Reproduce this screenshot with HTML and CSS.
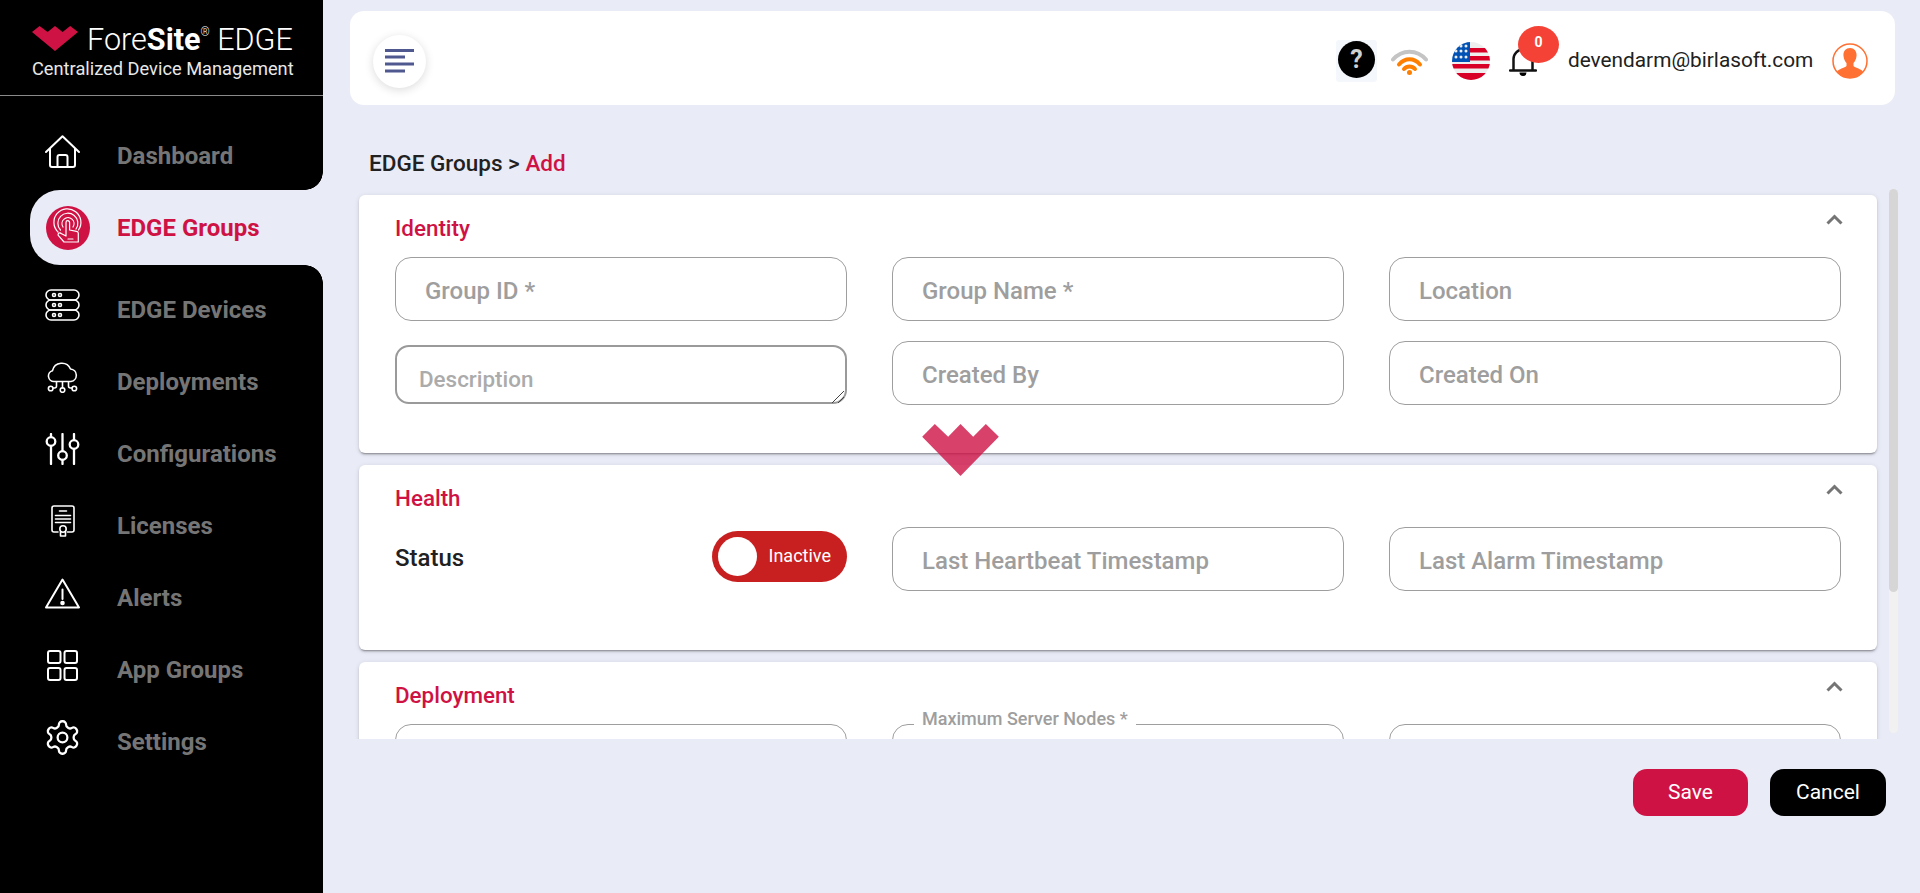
FILE: index.html
```html
<!DOCTYPE html>
<html lang="en">
<head>
    <meta charset="UTF-8">
    <title>EDGE Groups - Add</title>
    <link rel="stylesheet" href="styles.css">
</head>
<body>
    <aside class="sidebar">
        <div class="brand">
            <div class="brand-top">
                <svg class="brand-mark" viewBox="0 0 230 156" preserveAspectRatio="none"><path d="M0 38L38 0L78 38L115 0L153 38L191 0L230 38L115 156Z"/></svg>
                <div class="brand-name">Fore<b>Site</b><sup>®</sup> EDGE</div>
            </div>
            <div class="brand-sub">Centralized Device Management</div>
        </div>
        <nav class="nav">
            <a class="nav-item">
                <span class="nav-icon"><svg width="35" height="33" viewBox="0 0 35 33"><path d="M1 17L17.5 1.2L34 17M5 13.5V30a2 2 0 0 0 2 2H28a2 2 0 0 0 2-2V13.5M12.5 32V22a2 2 0 0 1 2-2h6a2 2 0 0 1 2 2V32"/></svg></span>
                Dashboard
            </a>
            <a class="nav-item active">
                <span class="nav-icon">
                    <svg width="44" height="44" viewBox="0 0 44 44">
                        <circle class="disc" cx="22" cy="22" r="22"/>
                        <g class="touch">
                            <path d="M17 21a6 6 0 1 1 10 0M14.5 24a10 10 0 1 1 15.5-1M12 26a13.500 13.500 0 1 1 20.500-2"/>
                            <path d="M20 24V16.500a1.800 1.800 0 0 1 3.600 0V24l7 1.300a2 2 0 0 1 1.700 2V36H18l-5.500-6.300a1.700 1.700 0 0 1 2.600-2.200L20 30ZM22 33h5"/>
                        </g>
                    </svg>
                </span>
                EDGE Groups
            </a>
            <a class="nav-item after-active">
                <span class="nav-icon"><svg class="thin" width="35" height="32" viewBox="0 0 35 32"><rect x="1" y="1" width="33" height="10" rx="5"/><rect x="1" y="11" width="33" height="10" rx="5"/><rect x="1" y="21" width="33" height="10" rx="5"/><circle cx="9" cy="6" r="1.500"/><circle cx="15" cy="6" r="1.500"/><circle cx="9" cy="16" r="1.500"/><circle cx="15" cy="16" r="1.500"/><circle cx="9" cy="26" r="1.500"/><circle cx="15" cy="26" r="1.500"/></svg></span>
                EDGE Devices
            </a>
            <a class="nav-item">
                <span class="nav-icon"><svg class="thin" width="35" height="31" viewBox="0 0 35 31"><path d="M10 19.500H9a5.500 5.500 0 0 1-1.500-10.800A9.500 9.500 0 0 1 25.500 7a6.300 6.300 0 0 1 .5 12.500ZM17.500 19.500V26M11.500 19.500V24a2 2 0 0 1-2 2H8M23.500 19.500V24a2 2 0 0 0 2 2H27"/><circle cx="5.700" cy="26.500" r="2.300"/><circle cx="17.500" cy="28" r="2.300"/><circle cx="29.300" cy="26.500" r="2.300"/></svg></span>
                Deployments
            </a>
            <a class="nav-item">
                <span class="nav-icon"><svg class="thick" width="35" height="32" viewBox="0 0 35 32"><path d="M6 1V4M6 13V31M17.500 1V18M17.500 27V31M29 1V7M29 16V31"/><circle cx="6" cy="8.500" r="4.300"/><circle cx="17.500" cy="22.500" r="4.300"/><circle cx="29" cy="11.500" r="4.300"/></svg></span>
                Configurations
            </a>
            <a class="nav-item">
                <span class="nav-icon"><svg class="thin" width="35" height="32" viewBox="0 0 35 32"><path d="M13 27H9a2 2 0 0 1-2-2V3a2 2 0 0 1 2-2H27a2 2 0 0 1 2 2V25a2 2 0 0 1-2 2H22.500M14.500 6h7M10.500 10.500h15M10.500 14h15M10.500 17.500h15"/><circle cx="18" cy="24" r="3.200"/><path d="M15.500 27v4h5v-4"/></svg></span>
                Licenses
            </a>
            <a class="nav-item">
                <span class="nav-icon"><svg width="35" height="31" viewBox="0 0 35 31"><path d="M17.500 1.500L34 29.500H1ZM17.500 11.500V21"/><circle class="dot" cx="17.500" cy="25" r="1.300"/></svg></span>
                Alerts
            </a>
            <a class="nav-item">
                <span class="nav-icon"><svg width="35" height="31" viewBox="0 0 35 31"><rect x="3" y="1" width="12.500" height="12" rx="2"/><rect x="19.500" y="1" width="12.500" height="12" rx="2"/><rect x="3" y="18" width="12.500" height="12" rx="2"/><rect x="19.500" y="18" width="12.500" height="12" rx="2"/></svg></span>
                App Groups
            </a>
            <a class="nav-item">
                <span class="nav-icon"><svg class="gear" width="39" height="39" viewBox="0 0 24 24"><path d="M12.220 2h-.44a2 2 0 0 0-2 2v.18a2 2 0 0 1-1 1.730l-.43.25a2 2 0 0 1-2 0l-.15-.08a2 2 0 0 0-2.730.73l-.22.38a2 2 0 0 0 .73 2.730l.15.1a2 2 0 0 1 1 1.720v.51a2 2 0 0 1-1 1.740l-.15.09a2 2 0 0 0-.73 2.730l.22.38a2 2 0 0 0 2.730.73l.15-.08a2 2 0 0 1 2 0l.43.25a2 2 0 0 1 1 1.730V20a2 2 0 0 0 2 2h.44a2 2 0 0 0 2-2v-.18a2 2 0 0 1 1-1.730l.43-.25a2 2 0 0 1 2 0l.15.08a2 2 0 0 0 2.730-.73l.22-.39a2 2 0 0 0-.73-2.730l-.15-.08a2 2 0 0 1-1-1.740v-.5a2 2 0 0 1 1-1.740l.15-.09a2 2 0 0 0 .73-2.730l-.22-.38a2 2 0 0 0-2.730-.73l-.15.08a2 2 0 0 1-2 0l-.43-.25a2 2 0 0 1-1-1.730V4a2 2 0 0 0-2-2z"/><circle cx="12" cy="12" r="3"/></svg></span>
                Settings
            </a>
        </nav>
    </aside>

    <main class="main">
        <header class="topbar">
            <button class="menu-btn">
                <svg width="29" height="24" viewBox="0 0 29 24"><path d="M0 1.500H29M0 8H20M0 15H29M0 22H20"/></svg>
            </button>
            <div class="topbar-right">
                <div class="help"><span class="help-disc">?</span></div>
                <svg class="wifi" width="37" height="28" viewBox="0 0 37 28">
                    <path class="wifi-off" d="M2 12.500C11 2 26 2 35 12.500"/>
                    <path class="wifi-on" d="M8 17.500C14 10.500 23 10.500 29 17.500M13 22C16 18.500 21 18.500 24 22"/>
                    <circle cx="18.500" cy="25.500" r="2.500" fill="#ff7f00"/>
                </svg>
                <svg class="flag" width="38" height="38" viewBox="0 0 38 38">
                    <clipPath id="flagClip"><circle cx="19" cy="19" r="19"/></clipPath>
                    <g clip-path="url(#flagClip)">
                        <rect width="38" height="38" fill="#eeeeee"/>
                        <path d="M14 6H38V10.500H14ZM14 14H38V18.500H14ZM0 22H38V26.500H0ZM0 31H38V38H0Z" fill="#d80027"/>
                        <rect width="18" height="20" fill="#0052b4"/>
                        <g fill="#eeeeee"><circle cx="9" cy="4" r="1.500"/><circle cx="14" cy="4" r="1.500"/><circle cx="4" cy="9" r="1.500"/><circle cx="9" cy="9" r="1.500"/><circle cx="14" cy="9" r="1.500"/><circle cx="4" cy="15" r="1.500"/><circle cx="9" cy="15" r="1.500"/><circle cx="14" cy="15" r="1.500"/></g>
                    </g>
                </svg>
                <div class="bell">
                    <svg width="28" height="30" viewBox="0 0 28 30"><path class="bell-body" d="M1 24.500H27M4.500 24.500V13a9.500 9.500 0 0 1 19 0V24.500"/><path d="M10.500 26.500h7a3.500 3.500 0 0 1-7 0Z"/></svg>
                    <span class="badge">0</span>
                </div>
                <span class="email">devendarm@birlasoft.com</span>
                <svg class="avatar" width="36" height="36" viewBox="0 0 36 36">
                    <clipPath id="avatarClip"><circle cx="18" cy="18" r="17"/></clipPath>
                    <circle class="avatar-ring" cx="18" cy="18" r="17"/>
                    <path clip-path="url(#avatarClip)" d="M18 5c-4.500 0-7 3.500-6.500 8 .3 3 1.500 5.500 3 7v3c-1 1.500-6 2.500-8.500 4.500-1 1-1.500 2.500-1.500 9h27c0-6.500-.5-8-1.500-9-2.500-2-7.500-3-8.500-4.500v-3c1.500-1.500 2.700-4 3-7 .5-4.500-2-8-6.500-8Z"/>
                </svg>
            </div>
        </header>

        <h1 class="crumb">EDGE Groups &gt; <span>Add</span></h1>

        <div class="content">
            <div class="cards">
                <section class="card card-identity">
                    <div class="card-head">
                        <h2>Identity</h2>
                        <svg class="chevron" width="17" height="11" viewBox="0 0 17 11"><path d="M1.500 9.500L8.500 2.500L15.500 9.500"/></svg>
                    </div>
                    <div class="fields">
                        <input class="field" placeholder="Group ID *">
                        <input class="field" placeholder="Group Name *">
                        <input class="field" placeholder="Location">
                        <div class="area-wrap">
                            <textarea class="field-area" placeholder="Description"></textarea>
                            <svg class="area-grip" width="12" height="12" viewBox="0 0 12 12"><path d="M0 12L12 0M6 12L12 6"/></svg>
                        </div>
                        <input class="field" placeholder="Created By">
                        <input class="field" placeholder="Created On">
                    </div>
                </section>

                <section class="card card-health">
                    <div class="card-head">
                        <h2>Health</h2>
                        <svg class="chevron" width="17" height="11" viewBox="0 0 17 11"><path d="M1.500 9.500L8.500 2.500L15.500 9.500"/></svg>
                    </div>
                    <div class="fields">
                        <div class="status-row">
                            <span class="status-label">Status</span>
                            <div class="toggle"><span class="toggle-thumb"></span><span class="toggle-text">Inactive</span></div>
                        </div>
                        <input class="field" placeholder="Last Heartbeat Timestamp">
                        <input class="field" placeholder="Last Alarm Timestamp">
                    </div>
                </section>

                <section class="card">
                    <div class="card-head">
                        <h2>Deployment</h2>
                        <svg class="chevron" width="17" height="11" viewBox="0 0 17 11"><path d="M1.500 9.500L8.500 2.500L15.500 9.500"/></svg>
                    </div>
                    <div class="fields">
                        <input class="field">
                        <fieldset class="field-float"><legend>Maximum Server Nodes *</legend></fieldset>
                        <input class="field">
                    </div>
                </section>
            </div>
            <div class="scrollbar"><div class="scrollbar-thumb"></div></div>
        </div>

        <div class="actions">
            <button class="btn btn-save">Save</button>
            <button class="btn btn-cancel">Cancel</button>
        </div>
    </main>

    <svg class="loader" viewBox="0 0 230 156"><path d="M0 38L38 0L78 38L115 0L153 38L191 0L230 38L115 156Z"/></svg>
</body>
</html>
```

FILE: styles.css
```css
* {
    box-sizing: border-box;
}

body {
    margin: 0;
    height: 893px;
    display: flex;
    overflow: hidden;
    background-color: #e9ebf7;
    font-family: Roboto, "Liberation Sans", sans-serif;
    color: #212121;
}

/* sidebar */
.sidebar {
    width: 323px;
    flex-shrink: 0;
    background-color: #000000;
}

.brand {
    height: 96px;
    padding: 26px 0 0 32px;
    border-bottom: 1px solid #8a8a8a;
}

.brand-top {
    display: flex;
    align-items: flex-start;
    height: 27px;
}

.brand-mark {
    width: 46px;
    height: 25px;
    flex-shrink: 0;
    fill: #cf1244;
}

.brand-name {
    margin-left: 9px;
    font-size: 32px;
    line-height: 26px;
    font-weight: 300;
    color: #ffffff;
    white-space: nowrap;
    transform: scaleX(0.955);
    transform-origin: left;
}

.brand-name b {
    font-weight: 700;
}

.brand-name sup {
    font-size: 12px;
    line-height: 0;
    vertical-align: 14px;
}

.brand-sub {
    margin-top: 4px;
    font-size: 19px;
    line-height: 24px;
    color: #e8e8e8;
    white-space: nowrap;
    transform: scaleX(0.96);
    transform-origin: left;
}

.nav {
    padding-top: 22px;
}

.nav-item {
    position: relative;
    display: flex;
    align-items: center;
    height: 72px;
    padding-left: 45px;
    font-size: 24px;
    font-weight: 700;
    color: #757575;
    white-space: nowrap;
}

.nav-item:first-child {
    padding-top: 4px;
}

.nav-icon {
    width: 72px;
    flex-shrink: 0;
    display: flex;
    align-items: center;
}

.nav-icon svg {
    margin-bottom: 10px;
    fill: none;
    stroke: #ffffff;
    stroke-width: 2;
    stroke-linejoin: round;
    stroke-linecap: round;
}

.nav-icon .thin {
    stroke-width: 1.6;
}

.nav-icon .thick {
    stroke-width: 2.3;
}

.nav-icon .gear {
    margin-left: -2px;
    stroke-width: 1.4;
}

.nav-icon .dot {
    fill: #ffffff;
}

.nav-icon .disc {
    fill: #cf1244;
    stroke: none;
}

.nav-icon .touch {
    stroke: #ffffff;
    stroke-width: 1.2;
}

.nav-item.active {
    width: 293px;
    height: 75px;
    margin-left: 30px;
    padding-left: 16px;
    border-radius: 30px 0 0 30px;
    background-color: #e9ebf7;
    color: #cf1244;
}

.nav-item.active .nav-icon {
    width: 71px;
}

.nav-item.active .nav-icon svg {
    margin-bottom: 0;
}

/* the curved corners where the active row meets the sidebar edge */
.nav-item.active::before,
.nav-item.active::after {
    content: "";
    position: absolute;
    right: 0;
    width: 18px;
    height: 18px;
}

.nav-item.active::before {
    top: -18px;
    background: radial-gradient(circle at 0 0, #000000 17.5px, #e9ebf7 18px);
}

.nav-item.active::after {
    bottom: -18px;
    background: radial-gradient(circle at 0 100%, #000000 17.5px, #e9ebf7 18px);
}

.nav-item.after-active {
    margin-top: 9px;
}

/* main column */
.main {
    flex: 1;
    min-width: 0;
}

.topbar {
    height: 94px;
    margin: 11px 25px 0 27px;
    padding: 6px 27px 0 23px;
    display: flex;
    align-items: center;
    justify-content: space-between;
    background-color: #ffffff;
    border-radius: 14px;
}

.menu-btn {
    width: 53px;
    height: 53px;
    padding: 0;
    border: none;
    border-radius: 50%;
    background-color: #ffffff;
    box-shadow: 0 2px 10px rgba(0, 0, 0, 0.14);
}

.menu-btn svg {
    display: block;
    margin: 0 auto;
    stroke: #50598f;
    stroke-width: 3;
    fill: none;
}

.topbar-right {
    display: flex;
    align-items: center;
}

.help {
    width: 41px;
    height: 42px;
    padding: 1px 2px;
    border-radius: 3px;
    background-color: #f4f7fb;
}

.help-disc {
    display: block;
    width: 37px;
    height: 37px;
    border-radius: 50%;
    background-color: #000000;
    color: #d0d0d0;
    font-size: 25px;
    font-weight: 700;
    line-height: 37px;
    text-align: center;
}

.wifi {
    margin-left: 14px;
    fill: none;
    stroke-width: 4;
    stroke-linecap: round;
}

.wifi-off {
    stroke: #c4c4c4;
}

.wifi-on {
    stroke: #ff7f00;
}

.flag {
    margin-left: 24px;
}

.bell {
    position: relative;
    width: 28px;
    height: 30px;
    margin-left: 19px;
}

.bell svg {
    display: block;
}

.bell-body {
    fill: none;
    stroke: #111111;
    stroke-width: 2.5;
    stroke-linecap: round;
}

.badge {
    position: absolute;
    left: 9px;
    top: -20px;
    width: 41px;
    height: 37px;
    border-radius: 50%;
    background-color: #f44336;
    color: #ffffff;
    font-size: 14px;
    font-weight: 700;
    line-height: 32px;
    text-align: center;
}

.email {
    width: 246px;
    margin-left: 31px;
    padding-bottom: 2px;
    font-size: 20.8px;
    color: #212121;
    white-space: nowrap;
}

.avatar {
    margin-left: 18px;
    fill: #ff7033;
}

.avatar-ring {
    fill: none;
    stroke: #ff7033;
    stroke-width: 1.5;
}

.crumb {
    margin: 46px 0 12px 46px;
    font-size: 22.5px;
    line-height: 24px;
    font-weight: 500;
    color: #212121;
}

.crumb span {
    color: #cf1244;
}

.content {
    display: flex;
    height: 552px;
    margin: 0 22px 0 31px;
}

.cards {
    width: 1530px;
    padding: 8px 7px 0 5px;
    overflow: hidden;
}

.scrollbar {
    width: 9px;
    margin: 2px 0 6px 5px;
    border-radius: 5px;
    background-color: #f1f1f1;
}

.scrollbar-thumb {
    height: 403px;
    border-radius: 5px;
    background-color: #d6d6d6;
}

.card {
    margin-bottom: 12px;
    padding: 21px 36px 0 36px;
    border-radius: 6px;
    background-color: #ffffff;
    box-shadow: 0 3px 1px -2px rgba(0, 0, 0, 0.2), 0 2px 2px 0 rgba(0, 0, 0, 0.14), 0 1px 5px 0 rgba(0, 0, 0, 0.12);
}

.card-identity {
    height: 258px;
}

.card-health {
    height: 185px;
}

.card-head {
    display: flex;
    justify-content: space-between;
    align-items: flex-start;
    height: 24px;
    margin-bottom: 17px;
}

.card-head h2 {
    margin: 0;
    font-size: 22.4px;
    line-height: 24px;
    font-weight: 500;
    color: #cf1244;
}

.chevron {
    margin: -2px -2px 0 0;
    fill: none;
    stroke: #757575;
    stroke-width: 3;
}

.fields {
    display: grid;
    grid-template-columns: repeat(3, 452px);
    column-gap: 45px;
    row-gap: 20px;
}

.field {
    width: 100%;
    height: 64px;
    padding: 3px 29px 0;
    border: 1px solid #9e9e9e;
    border-radius: 16px;
    background-color: #ffffff;
    font-family: inherit;
    font-size: 24px;
    outline: none;
}

.field::placeholder {
    color: #9e9e9e;
    opacity: 1;
    font-weight: 500;
}

.area-wrap {
    position: relative;
}

.field-area {
    display: block;
    width: 100%;
    height: 59px;
    margin-top: 4px;
    padding: 19px 22px 0;
    border: 2px solid #9a9a9a;
    border-radius: 14px;
    font-family: inherit;
    font-size: 22.4px;
    line-height: 26px;
    outline: none;
    resize: none;
}

.field-area::placeholder {
    color: #ababab;
    opacity: 1;
    font-weight: 500;
}

.area-grip {
    position: absolute;
    right: 3px;
    bottom: 2px;
    fill: none;
    stroke: #444444;
    stroke-width: 1;
}

.field-float {
    height: 96px;
    margin: -16px 0 0;
    padding: 0;
    border: 1px solid #9e9e9e;
    border-radius: 16px;
}

.field-float legend {
    margin-left: 21px;
    padding: 0 8px 10px;
    font-size: 18px;
    line-height: 22px;
    font-weight: 500;
    color: #9e9e9e;
}

.status-row {
    display: flex;
    justify-content: space-between;
    align-items: flex-start;
    height: 64px;
    padding-top: 4px;
}

.status-label {
    padding-top: 14px;
    font-size: 24px;
    line-height: 26px;
    font-weight: 500;
}

.toggle {
    width: 135px;
    height: 51px;
    padding: 6px 16px 0 6px;
    display: flex;
    justify-content: space-between;
    border-radius: 26px;
    background-color: #c82020;
    color: #ffffff;
}

.toggle-thumb {
    width: 39px;
    height: 39px;
    border-radius: 50%;
    background-color: #ffffff;
}

.toggle-text {
    font-size: 18px;
    line-height: 37px;
}

.actions {
    display: flex;
    justify-content: flex-end;
    gap: 22px;
    margin: 30px 34px 0 0;
}

.btn {
    height: 47px;
    padding-bottom: 2px;
    border: none;
    border-radius: 14px;
    color: #ffffff;
    font-family: inherit;
    font-size: 21px;
}

.btn-save {
    width: 115px;
    background-color: #cf1244;
}

.btn-cancel {
    width: 116px;
    background-color: #000000;
}

/* page loader mark, sits over the form */
.loader {
    position: fixed;
    left: 922px;
    top: 424px;
    width: 77px;
    height: 52px;
    fill: #cf1244;
    opacity: 0.8;
}
```
